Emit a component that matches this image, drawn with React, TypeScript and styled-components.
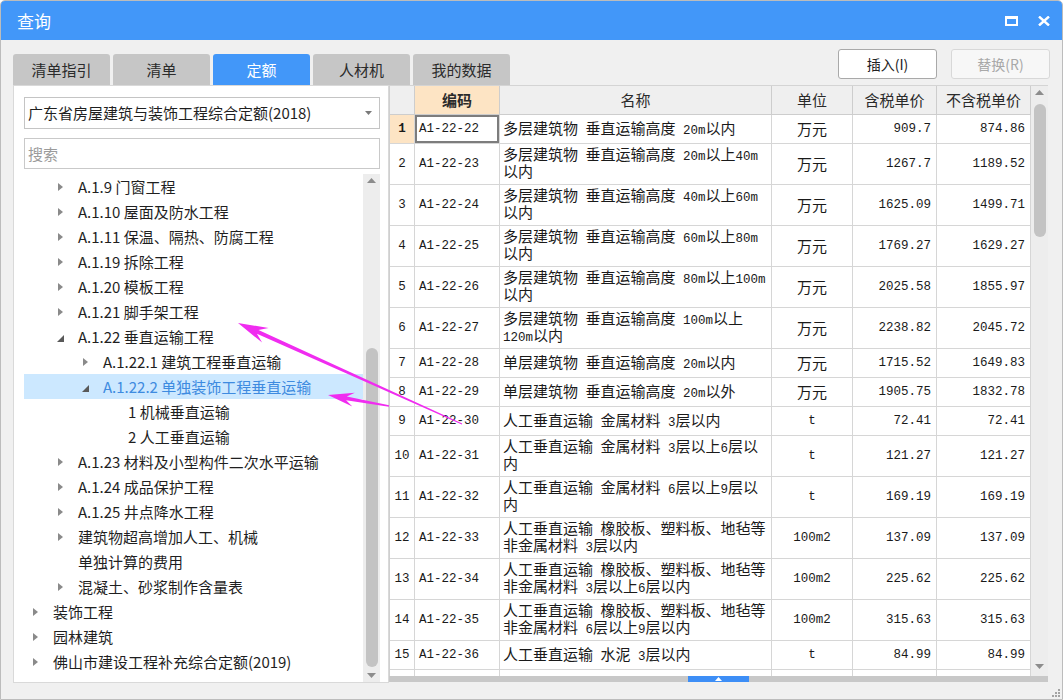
import React from 'react';
import styled, { createGlobalStyle } from 'styled-components';

const SANS = `"Noto Sans CJK SC", "Noto Sans", sans-serif`;
const MONO = `"Liberation Mono", "Noto Sans CJK SC", monospace`;

const GlobalStyle = createGlobalStyle`
  html, body { margin: 0; padding: 0; background: #ffffff; }
  body { font-family: ${SANS}; }
  * { box-sizing: border-box; }
`;

const Window = styled.div`
  position: relative;
  width: 1063px;
  height: 700px;
  display: flex;
  flex-direction: column;
  border: 1px solid #bcbcbc;
  border-radius: 5px 5px 0 0;
  background: #f0f0f0;
  overflow: hidden;
  font-family: ${SANS};
`;

const TitleBar = styled.div`
  height: 39px;
  flex: none;
  display: flex;
  align-items: center;
  background: #4297f9;
  padding: 0 12px 0 16px;
  color: #ffffff;
`;

const Title = styled.div`
  flex: 1;
  font-size: 17px;
  line-height: 20px;
`;

const TitleButtons = styled.div`
  display: flex;
  align-items: center;
  gap: 20px;
`;

const TopStrip = styled.div`
  height: 45px;
  flex: none;
  display: flex;
  justify-content: space-between;
  padding: 0 12px;
`;

const Tabs = styled.div`
  display: flex;
  gap: 3px;
  align-self: flex-end;
`;

const Tab = styled.div<{ $active?: boolean }>`
  width: 97px;
  height: 31px;
  display: flex;
  align-items: center;
  justify-content: center;
  border-radius: 3px 3px 0 0;
  font-size: 15px;
  line-height: 20px;
  background: ${(p) => (p.$active ? '#4297f9' : '#c6c6c6')};
  color: ${(p) => (p.$active ? '#ffffff' : '#2b2b2b')};
`;

const Buttons = styled.div`
  display: flex;
  gap: 14px;
  padding-top: 9px;
`;

const Button = styled.button<{ $disabled?: boolean }>`
  width: 99px;
  height: 30px;
  padding: 0;
  border-radius: 3px;
  font-family: ${SANS};
  font-size: 14px;
  line-height: 18px;
  border: 1px solid ${(p) => (p.$disabled ? '#d8d8d8' : '#a9a9a9')};
  background: ${(p) => (p.$disabled ? '#f7f7f7' : '#ffffff')};
  color: ${(p) => (p.$disabled ? '#a8a8a8' : '#222222')};
`;

const Main = styled.div`
  height: 598px;
  flex: none;
  display: flex;
  padding: 0 0 0 12px;
`;

const LeftPanel = styled.div`
  width: 376px;
  flex: none;
  display: flex;
  flex-direction: column;
  background: #ffffff;
  border: 1px solid #d9d9d9;
  padding: 11px 8px 0 10px;
`;

const Select = styled.div`
  height: 32px;
  flex: none;
  margin-bottom: 9px;
  border: 1px solid #c4c4c4;
  background: #ffffff;
  display: flex;
  align-items: center;
  padding: 0 7px 0 3px;
  font-size: 15px;
  color: #1f1f1f;
`;

const SelectText = styled.span`
  flex: 1;
  line-height: 20px;
  white-space: nowrap;
`;

const Search = styled.div`
  height: 31px;
  flex: none;
  margin-bottom: 5px;
  border: 1px solid #c9c9c9;
  background: #ffffff;
  display: flex;
  align-items: center;
  padding-left: 3px;
  font-size: 15px;
  line-height: 20px;
  color: #9b9b9b;
`;

const TreeArea = styled.div`
  flex: 1;
  display: flex;
  min-height: 0;
`;

const TreeList = styled.div`
  flex: 1;
  overflow: hidden;
`;

const TreeRow = styled.div<{ $level: number; $selected?: boolean }>`
  display: flex;
  align-items: flex-start;
  padding-left: ${(p) => (p.$level - 1) * 25}px;
  background: ${(p) => (p.$selected ? '#cce8ff' : 'transparent')};
  color: ${(p) => (p.$selected ? '#3e8be0' : '#1f1f1f')};
  font-size: 15px;
  line-height: 25px;
  white-space: pre-line;
`;

const Expander = styled.span`
  width: 22px;
  height: 25px;
  flex: none;
  display: flex;
  align-items: center;
  justify-content: center;
`;

const TreeLabel = styled.span`
  margin-left: 7px;
`;

const VScroll = styled.div<{ $pb?: number }>`
  width: 17px;
  flex: none;
  display: flex;
  flex-direction: column;
  align-items: center;
  background: #ededed;
  padding-bottom: ${(p) => p.$pb ?? 0}px;
`;

const ScrollArrow = styled.div`
  height: 13px;
  width: 100%;
  flex: none;
  display: flex;
  align-items: center;
  justify-content: center;
`;

const Thumb = styled.div<{ $top: number; $h: number }>`
  width: 12px;
  flex: none;
  height: ${(p) => p.$h}px;
  margin-top: ${(p) => p.$top}px;
  border-radius: 6px;
  background: #c3c3c3;
`;

const Spacer = styled.div`
  flex: 1;
`;

const RightPanel = styled.div`
  width: 659px;
  flex: none;
  display: flex;
  flex-direction: column;
  border-top: 1px solid #d4d4d4;
`;

const TableWrap = styled.div`
  flex: 1;
  display: flex;
  min-height: 0;
`;

const GridArea = styled.div`
  width: 642px;
  flex: none;
  display: flex;
  flex-direction: column;
  overflow: hidden;
  background: #ffffff;
  border-left: 1px solid #cfcfcf;
`;

const Row = styled.div<{ $h: number; $head?: boolean }>`
  display: grid;
  grid-template-columns: 25px 85px 272px 81px 84px 94px;
  height: ${(p) => p.$h}px;
  flex: none;
  border-bottom: 1px solid ${(p) => (p.$head ? '#cdcdcd' : '#d6d6d6')};
`;

type Align = 'left' | 'center' | 'right';

const Cell = styled.div<{ $align?: Align; $bg?: string; $mono?: boolean; $bold?: boolean; $sel?: boolean; $head?: boolean }>`
  display: flex;
  align-items: center;
  justify-content: ${(p) => (p.$align === 'right' ? 'flex-end' : p.$align === 'center' ? 'center' : 'flex-start')};
  padding: ${(p) => (p.$align === 'right' ? '0 5px 0 0' : p.$align === 'center' ? '0' : '0 0 0 3px')};
  border-right: 1px solid ${(p) => (p.$head ? '#cdcdcd' : '#d6d6d6')};
  background: ${(p) => p.$bg ?? (p.$head ? '#efefef' : '#ffffff')};
  font-family: ${(p) => (p.$mono ? MONO : SANS)};
  font-size: ${(p) => (p.$mono ? '12.5px' : '15px')};
  font-weight: ${(p) => (p.$bold ? 700 : 400)};
  color: ${(p) => (p.$head ? '#2a2a2a' : '#1a1a1a')};
  line-height: 16px;
  white-space: nowrap;
  box-shadow: ${(p) => (p.$sel ? 'inset 0 0 0 2px #7d7d7d' : 'none')};
`;

const CodeCell = styled(Cell)`
  padding-left: 4px;
`;

const NameLines = styled.div`
  display: flex;
  flex-direction: column;
  padding-top: 2px;
`;

const NameLine = styled.div`
  height: 17px;
  line-height: 17px;
  font-family: "Liberation Mono", "Noto Sans CJK SC", monospace;
  font-size: 15px;
`;

const Lat = styled.span`
  font-family: "Liberation Mono", monospace;
  font-size: 12.5px;
  white-space: pre;
`;

const HBar = styled.div`
  height: 6px;
  flex: none;
  margin-bottom: 1px;
  background: #c8c8c8;
  display: flex;
  justify-content: center;
`;

const HBarHandle = styled.div`
  width: 61px;
  height: 6px;
  background: #3d8ef6;
  display: flex;
  align-items: center;
  justify-content: center;
`;

const Footer = styled.div`
  flex: 1;
  display: flex;
  justify-content: flex-end;
  align-items: flex-end;
  padding: 0 2px 2px 0;
`;

const Overlay = styled.svg`
  position: absolute;
  top: -1px;
  left: -1px;
  width: 1063px;
  height: 700px;
  pointer-events: none;
`;

/* ---------- icons ---------- */

const Collapsed = () => (
  <svg width="5" height="8" viewBox="0 0 5 8">
    <path d="M0 0 L5 4 L0 8 Z" fill="#8a8a8a" />
  </svg>
);

const ExpandedIcon = () => (
  <svg width="7" height="7" viewBox="0 0 7 7" style={{ marginTop: 3 }}>
    <path d="M7 0 L7 7 L0 7 Z" fill="#595959" />
  </svg>
);

const UpTri = ({ color = '#8c8c8c' }: { color?: string }) => (
  <svg width="9" height="5" viewBox="0 0 9 5">
    <path d="M0 5 L4.5 0 L9 5 Z" fill={color} />
  </svg>
);

const DownTri = ({ color = '#8c8c8c' }: { color?: string }) => (
  <svg width="9" height="5" viewBox="0 0 9 5">
    <path d="M0 0 L9 0 L4.5 5 Z" fill={color} />
  </svg>
);

const MaxIcon = () => (
  <svg width="13" height="10" viewBox="0 0 13 10">
    <rect x="1" y="1.5" width="11" height="7.5" fill="none" stroke="#fff" strokeWidth="2" />
    <rect x="0" y="0" width="13" height="3" fill="#fff" />
  </svg>
);

const CloseIcon = () => (
  <svg width="12" height="10" viewBox="0 0 12 10">
    <path d="M1 0.5 L11 9.5 M11 0.5 L1 9.5" stroke="#fff" strokeWidth="2.4" />
  </svg>
);

const Grip = () => (
  <svg width="9" height="9" viewBox="0 0 9 9">
    {[
      [7, 1],
      [4, 4],
      [7, 4],
      [1, 7],
      [4, 7],
      [7, 7],
    ].map(([x, y], i) => (
      <rect key={i} x={x} y={y} width="2" height="2" fill="#a3a3a3" />
    ))}
  </svg>
);

/* ---------- arrows ---------- */

type P = [number, number];
function arrowPoints(tip: P, tail: P, headLen: number, headHalf: number, neckW: number, tailW: number) {
  const dx = tip[0] - tail[0];
  const dy = tip[1] - tail[1];
  const len = Math.hypot(dx, dy);
  const ux = dx / len;
  const uy = dy / len;
  const nx = -uy;
  const ny = ux;
  const base: P = [tip[0] - ux * headLen, tip[1] - uy * headLen];
  const notch: P = [tip[0] - ux * headLen * 0.72, tip[1] - uy * headLen * 0.72];
  const pts: P[] = [
    tip,
    [base[0] + nx * headHalf, base[1] + ny * headHalf],
    [notch[0] + (nx * neckW) / 2, notch[1] + (ny * neckW) / 2],
    [tail[0] + (nx * tailW) / 2, tail[1] + (ny * tailW) / 2],
    [tail[0] - (nx * tailW) / 2, tail[1] - (ny * tailW) / 2],
    [notch[0] - (nx * neckW) / 2, notch[1] - (ny * neckW) / 2],
    [base[0] - nx * headHalf, base[1] - ny * headHalf],
  ];
  return pts.map((p) => `${p[0].toFixed(1)},${p[1].toFixed(1)}`).join(' ');
}

/* ---------- data ---------- */

type TreeItem = { level: number; label: string; state: 'c' | 'e' | 'n'; selected?: boolean };

const tree: TreeItem[] = [
  { level: 2, label: 'A.1.9 门窗工程', state: 'c' },
  { level: 2, label: 'A.1.10 屋面及防水工程', state: 'c' },
  { level: 2, label: 'A.1.11 保温、隔热、防腐工程', state: 'c' },
  { level: 2, label: 'A.1.19 拆除工程', state: 'c' },
  { level: 2, label: 'A.1.20 模板工程', state: 'c' },
  { level: 2, label: 'A.1.21 脚手架工程', state: 'c' },
  { level: 2, label: 'A.1.22 垂直运输工程', state: 'e' },
  { level: 3, label: 'A.1.22.1 建筑工程垂直运输', state: 'c' },
  { level: 3, label: 'A.1.22.2 单独装饰工程垂直运输', state: 'e', selected: true },
  { level: 4, label: '1 机械垂直运输', state: 'n' },
  { level: 4, label: '2 人工垂直运输', state: 'n' },
  { level: 2, label: 'A.1.23 材料及小型构件二次水平运输', state: 'c' },
  { level: 2, label: 'A.1.24 成品保护工程', state: 'c' },
  { level: 2, label: 'A.1.25 井点降水工程', state: 'c' },
  { level: 2, label: '建筑物超高增加人工、机械\n单独计算的费用', state: 'c' },
  { level: 2, label: '混凝土、砂浆制作含量表', state: 'c' },
  { level: 1, label: '装饰工程', state: 'c' },
  { level: 1, label: '园林建筑', state: 'c' },
  { level: 1, label: '佛山市建设工程补充综合定额(2019)', state: 'c' },
];

type DataRow = { code: string; name: string[]; unit: string; tax: string; notax: string };

const rows: DataRow[] = [
  { code: 'A1-22-22', name: ['多层建筑物 垂直运输高度 20m以内'], unit: '万元', tax: '909.7', notax: '874.86' },
  { code: 'A1-22-23', name: ['多层建筑物 垂直运输高度 20m以上40m', '以内'], unit: '万元', tax: '1267.7', notax: '1189.52' },
  { code: 'A1-22-24', name: ['多层建筑物 垂直运输高度 40m以上60m', '以内'], unit: '万元', tax: '1625.09', notax: '1499.71' },
  { code: 'A1-22-25', name: ['多层建筑物 垂直运输高度 60m以上80m', '以内'], unit: '万元', tax: '1769.27', notax: '1629.27' },
  { code: 'A1-22-26', name: ['多层建筑物 垂直运输高度 80m以上100m', '以内'], unit: '万元', tax: '2025.58', notax: '1855.97' },
  { code: 'A1-22-27', name: ['多层建筑物 垂直运输高度 100m以上', '120m以内'], unit: '万元', tax: '2238.82', notax: '2045.72' },
  { code: 'A1-22-28', name: ['单层建筑物 垂直运输高度 20m以内'], unit: '万元', tax: '1715.52', notax: '1649.83' },
  { code: 'A1-22-29', name: ['单层建筑物 垂直运输高度 20m以外'], unit: '万元', tax: '1905.75', notax: '1832.78' },
  { code: 'A1-22-30', name: ['人工垂直运输 金属材料 3层以内'], unit: 't', tax: '72.41', notax: '72.41' },
  { code: 'A1-22-31', name: ['人工垂直运输 金属材料 3层以上6层以', '内'], unit: 't', tax: '121.27', notax: '121.27' },
  { code: 'A1-22-32', name: ['人工垂直运输 金属材料 6层以上9层以', '内'], unit: 't', tax: '169.19', notax: '169.19' },
  { code: 'A1-22-33', name: ['人工垂直运输 橡胶板、塑料板、地毡等', '非金属材料 3层以内'], unit: '100m2', tax: '137.09', notax: '137.09' },
  { code: 'A1-22-34', name: ['人工垂直运输 橡胶板、塑料板、地毡等', '非金属材料 3层以上6层以内'], unit: '100m2', tax: '225.62', notax: '225.62' },
  { code: 'A1-22-35', name: ['人工垂直运输 橡胶板、塑料板、地毡等', '非金属材料 6层以上9层以内'], unit: '100m2', tax: '315.63', notax: '315.63' },
  { code: 'A1-22-36', name: ['人工垂直运输 水泥 3层以内'], unit: 't', tax: '84.99', notax: '84.99' },
];

const LAT_RE = /^[A-Za-z0-9. ]+$/;

function Mixed({ text }: { text: string }) {
  const parts = text.split(/([A-Za-z0-9. ]+)/);
  return (
    <>
      {parts.map((p, i) =>
        !p ? null : LAT_RE.test(p) ? <Lat key={i}>{p}</Lat> : <React.Fragment key={i}>{p}</React.Fragment>
      )}
    </>
  );
}

export default function App() {
  return (
    <>
      <GlobalStyle />
      <Window>
        <TitleBar>
          <Title>查询</Title>
          <TitleButtons>
            <MaxIcon />
            <CloseIcon />
          </TitleButtons>
        </TitleBar>

        <TopStrip>
          <Tabs>
            <Tab>清单指引</Tab>
            <Tab>清单</Tab>
            <Tab $active>定额</Tab>
            <Tab>人材机</Tab>
            <Tab>我的数据</Tab>
          </Tabs>
          <Buttons>
            <Button>插入(I)</Button>
            <Button $disabled>替换(R)</Button>
          </Buttons>
        </TopStrip>

        <Main>
          <LeftPanel>
            <Select>
              <SelectText>广东省房屋建筑与装饰工程综合定额(2018)</SelectText>
              <svg width="7" height="4" viewBox="0 0 7 4">
                <path d="M0 0 L7 0 L3.5 4 Z" fill="#7a7a7a" />
              </svg>
            </Select>
            <Search>搜索</Search>
            <TreeArea>
              <TreeList>
                {tree.map((t, i) => (
                  <TreeRow key={i} $level={t.level} $selected={t.selected}>
                    <Expander>{t.state === 'c' ? <Collapsed /> : t.state === 'e' ? <ExpandedIcon /> : null}</Expander>
                    <TreeLabel>{t.label}</TreeLabel>
                  </TreeRow>
                ))}
              </TreeList>
              <VScroll>
                <ScrollArrow>
                  <UpTri />
                </ScrollArrow>
                <Thumb $top={161} $h={319} />
                <Spacer />
                <ScrollArrow>
                  <DownTri />
                </ScrollArrow>
              </VScroll>
            </TreeArea>
          </LeftPanel>

          <RightPanel>
            <TableWrap>
              <GridArea>
                <Row $h={29} $head>
                  <Cell $head $align="center" />
                  <Cell $head $align="center" $bg="#fde4c4" $bold>
                    编码
                  </Cell>
                  <Cell $head $align="center">名称</Cell>
                  <Cell $head $align="center">单位</Cell>
                  <Cell $head $align="center">含税单价</Cell>
                  <Cell $head $align="center">不含税单价</Cell>
                </Row>
                {rows.map((r, i) => (
                  <Row key={r.code} $h={r.name.length > 1 ? 41 : 29}>
                    <Cell $align="center" $mono $bold={i === 0} $bg={i === 0 ? '#fde4c4' : undefined}>
                      {i + 1}
                    </Cell>
                    <CodeCell $mono $sel={i === 0}>
                      {r.code}
                    </CodeCell>
                    <Cell>
                      <NameLines>
                        {r.name.map((line, j) => (
                          <NameLine key={j}>
                            <Mixed text={line} />
                          </NameLine>
                        ))}
                      </NameLines>
                    </Cell>
                    <Cell $align="center">
                      <Mixed text={r.unit} />
                    </Cell>
                    <Cell $align="right" $mono>
                      {r.tax}
                    </Cell>
                    <Cell $align="right" $mono>
                      {r.notax}
                    </Cell>
                  </Row>
                ))}
                <Row $h={29}>
                  <Cell />
                  <Cell />
                  <Cell />
                  <Cell />
                  <Cell />
                  <Cell />
                </Row>
              </GridArea>
              <VScroll $pb={3}>
                <ScrollArrow>
                  <UpTri />
                </ScrollArrow>
                <Thumb $top={5} $h={133} />
                <Spacer />
                <ScrollArrow>
                  <DownTri />
                </ScrollArrow>
              </VScroll>
            </TableWrap>
            <HBar>
              <HBarHandle>
                <svg width="7" height="4" viewBox="0 0 7 4">
                  <path d="M0 4 L3.5 0 L7 4 Z" fill="#ffffff" />
                </svg>
              </HBarHandle>
            </HBar>
          </RightPanel>
        </Main>

        <Footer>
          <Grip />
        </Footer>

        <Overlay viewBox="0 0 1063 700">
          <polygon points={arrowPoints([238, 323], [462, 424], 30, 8, 4, 1)} fill="#f02cf0" />
          <polygon points={arrowPoints([328, 395], [389, 406], 26, 7, 4, 1.5)} fill="#f02cf0" />
        </Overlay>
      </Window>
    </>
  );
}
